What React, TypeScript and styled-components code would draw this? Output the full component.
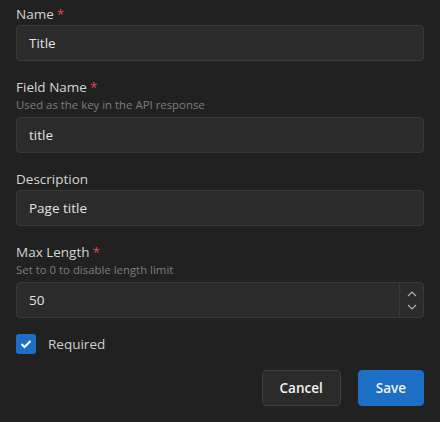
import React from "react";
import styled, { createGlobalStyle } from "styled-components";

const Global = createGlobalStyle`
  html, body { margin: 0; padding: 0; background: #212121; }
  body { font-family: "Open Sans", "Noto Sans", sans-serif; }
  * { box-sizing: border-box; }
`;

const Form = styled.div`
  width: 440px;
  height: 422px;
  background: #212121;
  padding: 4px 16px 16px;
  display: flex;
  flex-direction: column;
  gap: 16px;
`;

const Field = styled.div`
  display: flex;
  flex-direction: column;
`;

const Label = styled.label<{ $hasHint?: boolean }>`
  font-size: 13.5px;
  line-height: 20px;
  color: #d4d4d4;
  margin-bottom: ${(p) => (p.$hasHint ? "0" : "1px")};
`;

const Star = styled.span`
  color: #e5484d;
  margin-left: 3px;
`;

const Hint = styled.div`
  font-size: 11.4px;
  line-height: 16px;
  color: #7d7d7d;
  margin-bottom: 4px;
`;

const InputBox = styled.div`
  height: 36px;
  display: flex;
  align-items: stretch;
  background: #2b2b2b;
  border: 1px solid #3a3a3a;
  border-radius: 4px;
`;

const Value = styled.div`
  flex: 1;
  display: flex;
  align-items: center;
  padding: 0 12px;
  font-size: 13.5px;
  color: #e2e2e2;
`;

const Spinner = styled.div`
  width: 24px;
  border-left: 1px solid #3a3a3a;
  display: flex;
  flex-direction: column;
  align-items: center;
  justify-content: space-around;
  padding: 4px 0;
`;

const CheckRow = styled.div`
  display: flex;
  align-items: center;
  gap: 12px;
  height: 20px;
`;

const CheckBox = styled.div`
  width: 20px;
  height: 20px;
  border-radius: 3px;
  background: #1c6fc4;
  display: flex;
  align-items: center;
  justify-content: center;
`;

const CheckLabel = styled.span`
  font-size: 13.5px;
  color: #cfcfcf;
`;

const Actions = styled.div`
  display: flex;
  justify-content: flex-end;
  gap: 17px;
`;

const Button = styled.button<{ $primary?: boolean }>`
  height: 36px;
  padding: 0 ${(p) => (p.$primary ? "17px" : "17px")};
  border-radius: 4px;
  font-family: "Open Sans", "Noto Sans", sans-serif;
  font-size: 13.5px;
  font-weight: 600;
  color: #f2f2f2;
  background: ${(p) => (p.$primary ? "#1c6fc4" : "#2b2b2b")};
  border: 1px solid ${(p) => (p.$primary ? "#1c6fc4" : "#3e3e3e")};
`;

const Chevron = ({ up }: { up?: boolean }) => (
  <svg width="10" height="6" viewBox="0 0 10 6">
    <path
      d={up ? "M1 5 L5 1 L9 5" : "M1 1 L5 5 L9 1"}
      fill="none"
      stroke="#b0b0b0"
      strokeWidth="1.2"
    />
  </svg>
);

export default function App() {
  return (
    <>
      <Global />
      <Form>
        <Field>
          <Label>
            Name<Star>*</Star>
          </Label>
          <InputBox>
            <Value>Title</Value>
          </InputBox>
        </Field>
        <Field>
          <Label $hasHint>
            Field Name<Star>*</Star>
          </Label>
          <Hint>Used as the key in the API response</Hint>
          <InputBox>
            <Value>title</Value>
          </InputBox>
        </Field>
        <Field>
          <Label>Description</Label>
          <InputBox>
            <Value>Page title</Value>
          </InputBox>
        </Field>
        <Field>
          <Label $hasHint>
            Max Length<Star>*</Star>
          </Label>
          <Hint>Set to 0 to disable length limit</Hint>
          <InputBox>
            <Value>50</Value>
            <Spinner>
              <Chevron up />
              <Chevron />
            </Spinner>
          </InputBox>
        </Field>
        <CheckRow>
          <CheckBox>
            <svg width="12" height="10" viewBox="0 0 12 10">
              <path d="M1.5 5 L4.5 8 L10.5 2" fill="none" stroke="#fff" strokeWidth="2" />
            </svg>
          </CheckBox>
          <CheckLabel>Required</CheckLabel>
        </CheckRow>
        <Actions>
          <Button>Cancel</Button>
          <Button $primary>Save</Button>
        </Actions>
      </Form>
    </>
  );
}
